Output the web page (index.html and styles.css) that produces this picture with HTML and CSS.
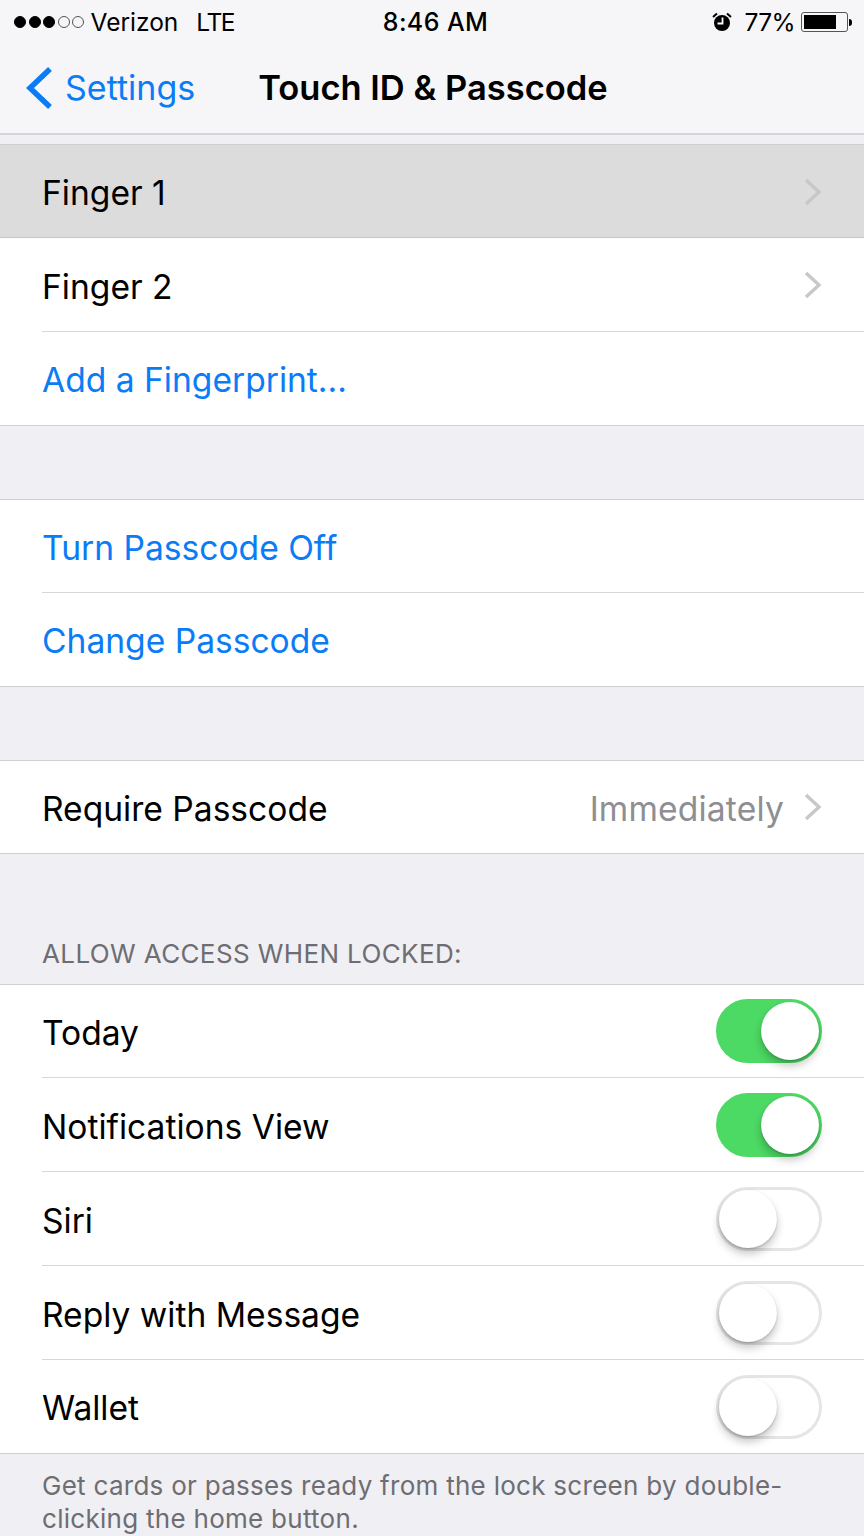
FILE: index.html
```html
<!DOCTYPE html>
<html lang="en">
<head>
    <meta charset="UTF-8">
    <meta name="viewport" content="width=device-width, initial-scale=1.0">
    <title>Touch ID &amp; Passcode</title>
    <link rel="stylesheet" href="styles.css">
</head>
<body>
    <div class="top-bar">
        <div class="status">
            <div class="status-left">
                <span class="dot"></span><span class="dot"></span><span class="dot"></span><span class="dot empty"></span><span class="dot empty"></span>
                <span class="carrier">Verizon</span>
                <span class="network">LTE</span>
            </div>
            <div class="clock">8:46 AM</div>
            <div class="status-right">
                <svg class="alarm" width="20" height="20" viewBox="0 0 20 20">
                    <circle cx="10" cy="11" r="8" fill="#000"/>
                    <path d="M1 5 L5 1.5 M19 5 L15 1.5" stroke="#000" stroke-width="2"/>
                    <path d="M10.5 5.5 V11.5 H5.5" stroke="#fff" stroke-width="1.8" fill="none"/>
                </svg>
                <span class="percent">77%</span>
                <div class="battery"><div class="battery-fill"></div></div>
                <div class="battery-tip"></div>
            </div>
        </div>
        <div class="nav">
            <div class="back">
                <svg width="28" height="44" viewBox="0 0 28 44">
                    <path d="M25 3 L5 22 L25 41" stroke="#0a7cf5" stroke-width="5.5" fill="none"/>
                </svg>
                <span>Settings</span>
            </div>
            <div class="title">Touch ID &amp; Passcode</div>
        </div>
    </div>

    <div class="group first">
        <div class="row pressed"><span>Finger 1</span><svg class="chevron" viewBox="0 0 18 28"><path d="M2 2 L15 14 L2 26"/></svg></div>
        <div class="row"><span>Finger 2</span><svg class="chevron" viewBox="0 0 18 28"><path d="M2 2 L15 14 L2 26"/></svg></div>
        <div class="row link"><span>Add a Fingerprint...</span></div>
    </div>

    <div class="group spaced">
        <div class="row link"><span>Turn Passcode Off</span></div>
        <div class="row link"><span>Change Passcode</span></div>
    </div>

    <div class="group spaced">
        <div class="row"><span>Require Passcode</span><span class="value">Immediately</span><svg class="chevron" viewBox="0 0 18 28"><path d="M2 2 L15 14 L2 26"/></svg></div>
    </div>

    <div class="section-title">ALLOW ACCESS WHEN LOCKED:</div>
    <div class="group">
        <div class="row"><span>Today</span><div class="switch on"><div class="knob"></div></div></div>
        <div class="row"><span>Notifications View</span><div class="switch on"><div class="knob"></div></div></div>
        <div class="row"><span>Siri</span><div class="switch"><div class="knob"></div></div></div>
        <div class="row"><span>Reply with Message</span><div class="switch"><div class="knob"></div></div></div>
        <div class="row"><span>Wallet</span><div class="switch"><div class="knob"></div></div></div>
    </div>
    <div class="footnote">Get cards or passes ready from the lock screen by double-clicking the home button.</div>
</body>
</html>
```

FILE: styles.css
```css
html, body {
    height: 1536px;
    overflow: hidden;
}

body {
    margin: 0;
    font-family: Inter, "Liberation Sans", sans-serif;
    background-color: #efeff4;
    color: #000;
}

.top-bar {
    height: 133px;
    background-color: #f6f6f9;
    border-bottom: 2px solid #d4d4d9;
}

.status {
    height: 44px;
    display: flex;
    align-items: center;
    justify-content: space-between;
    padding: 0 12px 0 14px;
    font-size: 24.5px;
}

.status-left, .status-right {
    display: flex;
    align-items: center;
    width: 300px;
}

.status-right {
    justify-content: flex-end;
}

.dot {
    width: 12px;
    height: 12px;
    border-radius: 50%;
    background-color: #000;
    border: 1px solid #000;
    box-sizing: border-box;
    margin-right: 2.5px;
}

.dot.empty {
    background-color: transparent;
    border-color: #555;
}

.carrier {
    margin-left: 4px;
    margin-right: 18px;
}

.network {
    letter-spacing: -1.4px;
}

.clock {
    font-weight: 500;
    font-size: 25px;
    letter-spacing: 0.4px;
    margin-left: 5px;
}

.percent {
    margin-left: 13px;
    margin-right: 6px;
    letter-spacing: -0.6px;
}

.battery {
    width: 47px;
    height: 20px;
    box-sizing: border-box;
    border: 1px solid #555;
    border-radius: 3px;
    padding: 2px;
}

.battery-fill {
    width: 32px;
    height: 100%;
    background-color: #000;
}

.battery-tip {
    width: 3px;
    height: 7px;
    margin-left: 1px;
    background-color: #000;
    border-radius: 0 3px 3px 0;
}

.nav {
    height: 87px;
    display: flex;
    align-items: center;
    position: relative;
}

.back {
    display: flex;
    align-items: center;
    margin-left: 25px;
    color: #0a7cf5;
    font-size: 34px;
    gap: 12px;
}

.title {
    margin-left: 63px;
    font-size: 34.5px;
    font-weight: 600;
}

.group {
    background-color: #fff;
    border-top: 1px solid #d0d0d4;
}

.group.first {
    margin-top: 9px;
}

.group.spaced {
    margin-top: 73px;
}

.row {
    height: 94px;
    box-sizing: border-box;
    padding: 2px 42px 0 42px;
    display: flex;
    align-items: center;
    font-size: 33.6px;
    position: relative;
    border-bottom: 1px solid #d0d0d4;
}

.row:first-child {
    height: 93px;
}

/* inset separator: only the last row runs full width */
.row:not(:last-child) {
    border-bottom: none;
    background-image: linear-gradient(#d8d8da, #d8d8da);
    background-size: calc(100% - 42px) 1px;
    background-position: right bottom;
    background-repeat: no-repeat;
}

.row.pressed {
    background-color: #dcdcdc;
    background-image: linear-gradient(#c8c8cb, #c8c8cb);
    background-size: 100% 1px;
}

.row.link {
    color: #0a7cf5;
}

.value {
    margin-left: auto;
    color: #8e8e93;
    letter-spacing: 0.18px;
}

.value + .chevron {
    margin-left: 20px;
}

.chevron {
    width: 18px;
    height: 28px;
    margin-left: auto;
    margin-top: -2px;
    fill: none;
    stroke: #c7c7cc;
    stroke-width: 3.4;
}

.section-title {
    margin-top: 73px;
    height: 57px;
    box-sizing: border-box;
    padding: 11px 0 0 42px;
    font-size: 26px;
    letter-spacing: 0.38px;
    color: #6d6d72;
}

.switch {
    width: 106px;
    height: 64px;
    margin-left: auto;
    margin-top: -2px;
    box-sizing: border-box;
    border: 3px solid #e5e5e5;
    border-radius: 32px;
    position: relative;
    background-color: #fff;
}

.row:first-child .switch {
    margin-top: -4px;
}

.switch.on {
    background-color: #4cd964;
    border-color: #4cd964;
}

.knob {
    width: 58px;
    height: 58px;
    border-radius: 50%;
    background-color: #fff;
    position: absolute;
    top: 0;
    left: 0;
    box-shadow: 0 6px 8px rgba(0, 0, 0, 0.22), 0 1px 2px rgba(0, 0, 0, 0.2);
}

.switch.on .knob {
    left: 42px;
}

.footnote {
    padding: 15px 60px 0 42px;
    font-size: 26px;
    line-height: 33px;
    letter-spacing: 0.28px;
    color: #6d6d72;
}
```
